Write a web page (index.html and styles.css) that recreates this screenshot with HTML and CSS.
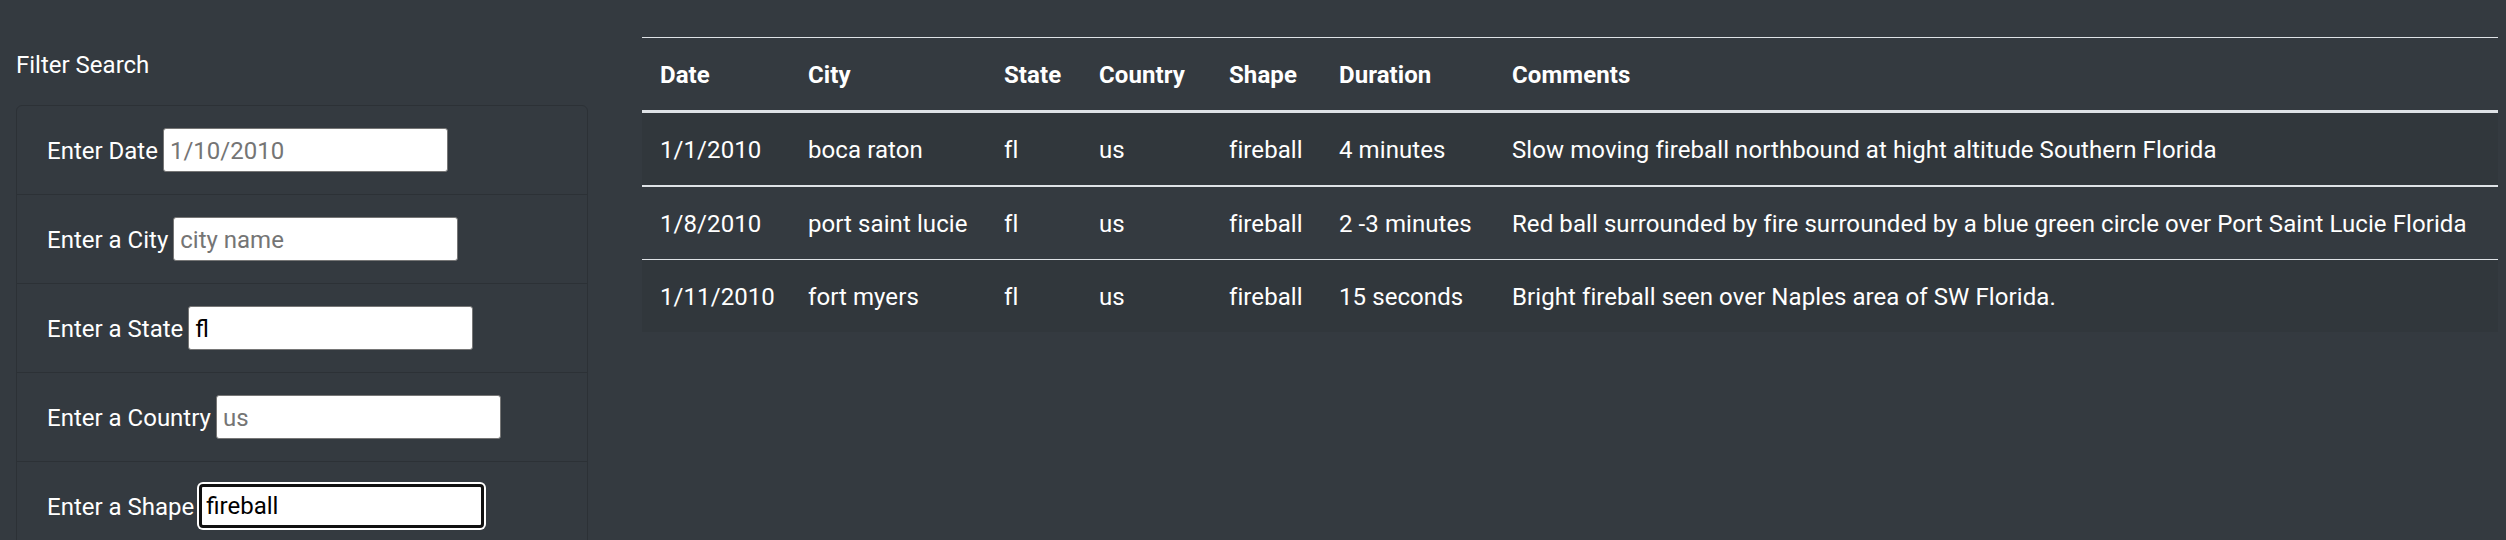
FILE: index.html
```html
<!DOCTYPE html>
<html lang="en">
<head>
<meta charset="utf-8">
<title>UFO Sightings</title>
<link rel="stylesheet" href="styles.css">
</head>
<body>
<div class="page">
  <aside class="sidebar">
    <div class="filter-title">Filter Search</div>
    <ul class="filter-list">
      <li class="filter-item">
        <label class="filter-label" for="datetime">Enter Date</label>
        <input class="filter-input" id="datetime" type="text" placeholder="1/10/2010">
      </li>
      <li class="filter-item">
        <label class="filter-label" for="city">Enter a City</label>
        <input class="filter-input" id="city" type="text" placeholder="city name">
      </li>
      <li class="filter-item">
        <label class="filter-label" for="state">Enter a State</label>
        <input class="filter-input" id="state" type="text" value="fl">
      </li>
      <li class="filter-item">
        <label class="filter-label" for="country">Enter a Country</label>
        <input class="filter-input" id="country" type="text" placeholder="us">
      </li>
      <li class="filter-item">
        <label class="filter-label" for="shape">Enter a Shape</label>
        <input class="filter-input is-focused" id="shape" type="text" value="fireball">
      </li>
    </ul>
  </aside>
  <main class="results">
    <table class="ufo-table">
      <colgroup>
        <col class="col-date">
        <col class="col-city">
        <col class="col-state">
        <col class="col-country">
        <col class="col-shape">
        <col class="col-duration">
        <col class="col-comments">
      </colgroup>
      <thead>
        <tr>
          <th>Date</th>
          <th>City</th>
          <th>State</th>
          <th>Country</th>
          <th>Shape</th>
          <th>Duration</th>
          <th>Comments</th>
        </tr>
      </thead>
      <tbody>
        <tr class="row-first">
          <td>1/1/2010</td>
          <td>boca raton</td>
          <td>fl</td>
          <td>us</td>
          <td>fireball</td>
          <td>4 minutes</td>
          <td>Slow moving fireball northbound at hight altitude Southern Florida</td>
        </tr>
        <tr class="row-second">
          <td>1/8/2010</td>
          <td>port saint lucie</td>
          <td>fl</td>
          <td>us</td>
          <td>fireball</td>
          <td>2 -3 minutes</td>
          <td>Red ball surrounded by fire surrounded by a blue green circle over Port Saint Lucie Florida</td>
        </tr>
        <tr class="row-third">
          <td>1/11/2010</td>
          <td>fort myers</td>
          <td>fl</td>
          <td>us</td>
          <td>fireball</td>
          <td>15 seconds</td>
          <td>Bright fireball seen over Naples area of SW Florida.</td>
        </tr>
      </tbody>
    </table>
  </main>
</div>
</body>
</html>
```

FILE: styles.css
```css
html, body {
  margin: 0;
  padding: 0;
}

body {
  background: #343a40;
  color: #fff;
  font-family: Roboto, "Liberation Sans", sans-serif;
  font-size: 24px;
  line-height: 36px;
  height: 540px;
  overflow: hidden;
}

.page {
  display: flex;
  align-items: flex-start;
}

.sidebar {
  flex: none;
  width: 572px;
  margin-left: 16px;
  padding-top: 47px;
}

.filter-title {
  margin-bottom: 22px;
}

.filter-list {
  list-style: none;
  margin: 0;
  padding: 0;
  border: 1px solid #2c3136;
  border-radius: 6px;
}

.filter-item {
  display: flex;
  align-items: center;
  gap: 5px;
  padding: 22px 30px;
}

.filter-item + .filter-item {
  border-top: 1px solid #2c3136;
}

.filter-label {
  white-space: nowrap;
  padding-top: 2px;
}

.filter-input {
  box-sizing: border-box;
  width: 285px;
  height: 44px;
  margin: 0;
  padding: 1px 6px 0;
  border: 1px solid #767676;
  border-radius: 3px;
  background: #fff;
  color: #000;
  font-family: inherit;
  font-size: 24px;
  line-height: 36px;
}

.filter-input::placeholder {
  color: #757575;
  opacity: 1;
}

.filter-input.is-focused {
  border: 3px solid #101010;
  border-radius: 4px;
  padding: 0 4px;
  outline: none;
  box-shadow: 0 0 0 2px #fff;
}

.results {
  flex: 1;
  min-width: 0;
  margin-left: 54px;
  margin-right: 8px;
  padding-top: 37px;
}

.ufo-table {
  width: 100%;
  border-collapse: collapse;
  table-layout: fixed;
  color: #fff;
  letter-spacing: 0.08px;
}

.col-date { width: 148px; }
.col-city { width: 196px; }
.col-state { width: 95px; }
.col-country { width: 130px; }
.col-shape { width: 110px; }
.col-duration { width: 173px; }

.ufo-table th,
.ufo-table td {
  padding: 19px 18px 17px;
  text-align: left;
  vertical-align: top;
  white-space: nowrap;
  line-height: 36px;
}

.ufo-table thead th {
  font-weight: 700;
  border-top: 1px solid #dee2e6;
  border-bottom: 3px solid #dee2e6;
}

.ufo-table tbody tr:nth-child(odd) {
  background: rgba(0, 0, 0, 0.05);
}

.ufo-table .row-second td {
  border-top: 2px solid #dee2e6;
}

.ufo-table .row-third td {
  border-top: 1px solid #dee2e6;
}
```
